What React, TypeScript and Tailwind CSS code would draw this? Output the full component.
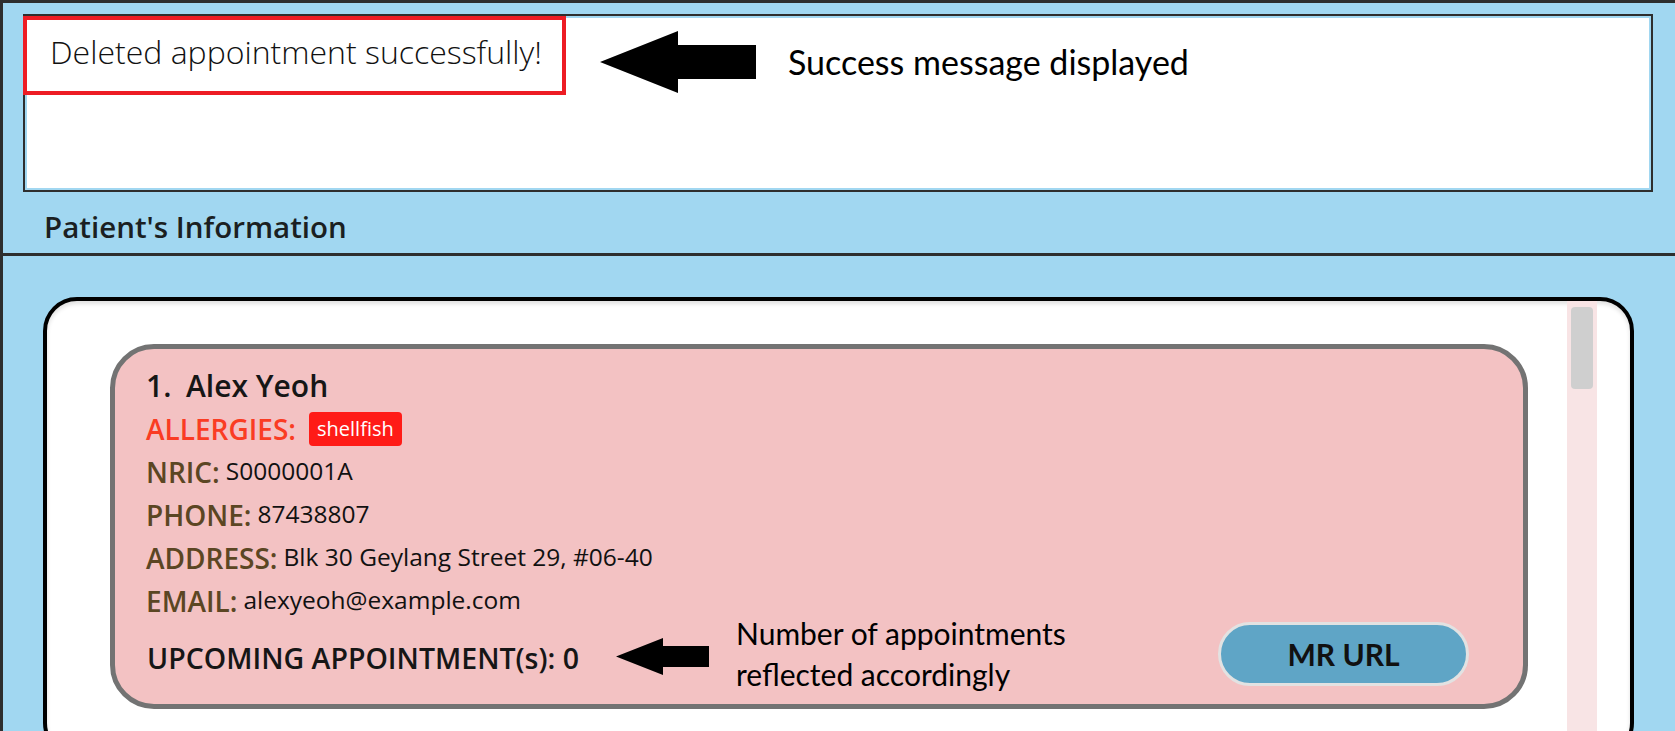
import React from 'react';

const appFont = { fontFamily: '"Open Sans", "Noto Sans", sans-serif' };
const noteFont = { fontFamily: 'Lato, "Open Sans", sans-serif' };

const BigArrow = () => (
  <svg width="156" height="62" viewBox="0 0 156 62">
    <polygon points="0,31 78,0 78,14 156,14 156,48 78,48 78,62" fill="#000" />
  </svg>
);

const SmallArrow = () => (
  <svg width="93" height="37" viewBox="0 0 93 37">
    <polygon points="0,18.5 47,0 47,8 93,8 93,29 47,29 47,37" fill="#000" />
  </svg>
);

const Field = ({ label, value }: { label: string; value: string }) => (
  <div className="flex h-[43px] items-center">
    <span className="text-[28px] font-semibold text-[#5b4623]">{label}</span>
    <span className="ml-[6px] text-[24.5px] text-[#111]">{value}</span>
  </div>
);

const ResultDisplay = () => (
  <div className="relative h-[178px] border-2 border-[#2e2e2e] p-[2px]">
    <div className="h-full bg-white pl-[23px] pt-[14px]">
      <p className="text-[32px] font-light leading-[40px] text-[#111]">Deleted appointment successfully!</p>
    </div>
    <div className="absolute -left-[2px] top-0 h-[79px] w-[543px] border-4 border-[#ed1c24]" />
    <div className="absolute left-[575px] top-[15px]">
      <BigArrow />
    </div>
    <div className="absolute left-[763px] top-[26px] text-[34px] leading-[40px] text-black" style={noteFont}>
      Success message displayed
    </div>
  </div>
);

const PatientCard = () => (
  <div className="rounded-[44px] border-[5px] border-[#737373] bg-[#f3c2c3] pb-[18px] pl-[31px] pr-[54px] pt-[14px]">
    <div className="flex h-[44px] items-center text-[30px] font-semibold text-[#161616]">
      <span className="w-[40px]">1.</span>
      <span>Alex Yeoh</span>
    </div>
    <div className="flex h-[43px] items-center">
      <span className="text-[28px] font-semibold text-[#fa3c23]">ALLERGIES:</span>
      <span className="ml-[13px] rounded-[4px] bg-[#ff1b17] px-[8px] text-[20px] font-medium leading-[34px] text-white">
        shellfish
      </span>
    </div>
    <Field label="NRIC:" value="S0000001A" />
    <Field label="PHONE:" value="87438807" />
    <Field label="ADDRESS:" value="Blk 30 Geylang Street 29, #06-40" />
    <Field label="EMAIL:" value="alexyeoh@example.com" />
    <div className="flex h-[64px] items-center justify-between">
      <div className="flex items-center">
        <span className="pl-[1px] pt-[8px] text-[28.5px] font-semibold text-[#161616]">UPCOMING APPOINTMENT(s): 0</span>
        <div className="ml-[37px] pt-[4px]">
          <SmallArrow />
        </div>
        <div className="ml-[27px] text-[30px] leading-[41px] text-black" style={noteFont}>
          <div>Number of appointments</div>
          <div>reflected accordingly</div>
        </div>
      </div>
      <button
        className="h-[64px] w-[251px] shrink-0 rounded-full border-[3px] border-[#e2e2e2] bg-[#5fa5c6] text-[30px] font-bold text-[#111]"
        style={noteFont}
      >
        MR URL
      </button>
    </div>
  </div>
);

export default function App() {
  return (
    <div
      className="flex h-[731px] w-[1675px] flex-col overflow-hidden border-l-[3px] border-t-[3px] border-[#2e2e2e] bg-[#a1d7f1]"
      style={appFont}
    >
      <section className="h-[253px] shrink-0 border-b-[3px] border-[#2e2e2e] pl-[20px] pr-[22px] pt-[11px]">
        <ResultDisplay />
        <h2 className="ml-[21px] mt-[17px] text-[29.5px] font-semibold leading-[36px] text-[#1b1f22]">
          Patient's Information
        </h2>
      </section>
      <section className="ml-[40px] mr-[41px] mt-[41px]">
        <div className="flex h-[460px] overflow-hidden rounded-[34px] border-4 border-black bg-white shadow-[inset_0_3px_4px_rgba(0,0,0,0.12)]">
          <div className="flex-1 pl-[63px] pr-[39px] pt-[43px]">
            <PatientCard />
          </div>
          <div className="mr-[33px] w-[30px] bg-[#f8e4e5] px-[4px] pt-[6px]">
            <div className="h-[82px] rounded-[4px] bg-[#cfcfcf]" />
          </div>
        </div>
      </section>
    </div>
  );
}
